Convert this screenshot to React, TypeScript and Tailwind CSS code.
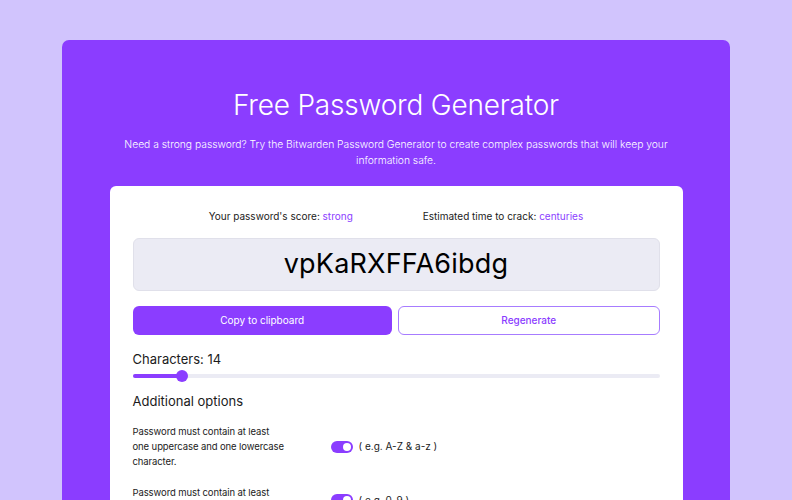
import React from "react";

function Toggle() {
  return (
    <div className="w-[22px] h-[12px] rounded-full bg-[#8b3dff] relative shrink-0">
      <div className="absolute right-[2px] top-[2px] w-[8px] h-[8px] rounded-full bg-white" />
    </div>
  );
}

export default function App() {
  return (
    <div
      className="w-[792px] h-[500px] overflow-hidden bg-[#d1c4fd] pt-[40px]"
      style={{ fontFamily: "Inter, 'Noto Sans', sans-serif" }}
    >
      <div className="ml-[62px] w-[668px] h-[500px] bg-[#8b3dff] rounded-t-[7px] px-[48px] pt-[48px] flex flex-col items-center">
        <h1 className="text-[28px] leading-[34px] font-light text-white tracking-[-0.2px]">
          Free Password Generator
        </h1>
        <p className="mt-[14px] text-[10.3px] leading-[16px] text-white text-center font-light w-[560px]">
          Need a strong password? Try the Bitwarden Password Generator to create complex passwords that will keep your information safe.
        </p>
        <div className="mt-[18px] w-[573px] bg-white rounded-t-[6px] px-[23px] pt-[23px] h-[400px]">
          <div className="flex justify-center gap-[70px] text-[10px] leading-[14px] text-[#1b1b1b]">
            <span>
              Your password's score: <span className="text-[#8b3dff]">strong</span>
            </span>
            <span>
              Estimated time to crack: <span className="text-[#8b3dff]">centuries</span>
            </span>
          </div>
          <div className="mt-[15px] h-[53px] rounded-[6px] bg-[#ebebf4] border border-[#e0e0ea] flex items-center justify-center">
            <span className="text-[27px] text-black tracking-[0.2px]">vpKaRXFFA6ibdg</span>
          </div>
          <div className="mt-[15px] flex gap-[6px]">
            <button className="flex-1 h-[29px] rounded-[6px] bg-[#8b3dff] text-white text-[10px]">
              Copy to clipboard
            </button>
            <button className="flex-1 h-[29px] rounded-[6px] bg-white border border-[#a77cff] text-[#8b3dff] text-[10px] font-medium">
              Regenerate
            </button>
          </div>
          <div className="mt-[16px] text-[13px] leading-[16px] text-[#1b1b1b]">Characters: 14</div>
          <div className="mt-[3px] relative h-[12px] flex items-center">
            <div className="w-full h-[4px] rounded-full bg-[#ebebf4]" />
            <div className="absolute left-0 top-[4px] w-[49px] h-[4px] rounded-full bg-[#8b3dff]" />
            <div className="absolute left-[43px] top-0 w-[12px] h-[12px] rounded-full bg-[#8b3dff]" />
          </div>
          <div className="mt-[11px] text-[13px] leading-[16px] text-[#1b1b1b]">Additional options</div>
          <div className="mt-[15px] flex items-center">
            <div className="w-[198px] shrink-0 text-[9.5px] leading-[15px] tracking-[-0.1px] text-[#1b1b1b]">
              Password must contain at least
              <br />
              one uppercase and one lowercase
              <br />
              character.
            </div>
            <Toggle />
            <span className="ml-[6px] text-[10px] text-[#1b1b1b]">( e.g. A-Z &amp; a-z )</span>
          </div>
          <div className="mt-[16px] flex items-center">
            <div className="w-[198px] shrink-0 text-[9.5px] leading-[15px] tracking-[-0.1px] text-[#1b1b1b]">
              Password must contain at least
              <br />
              one number.
            </div>
            <Toggle />
            <span className="ml-[6px] text-[10px] text-[#1b1b1b]">( e.g. 0-9 )</span>
          </div>
        </div>
      </div>
    </div>
  );
}
